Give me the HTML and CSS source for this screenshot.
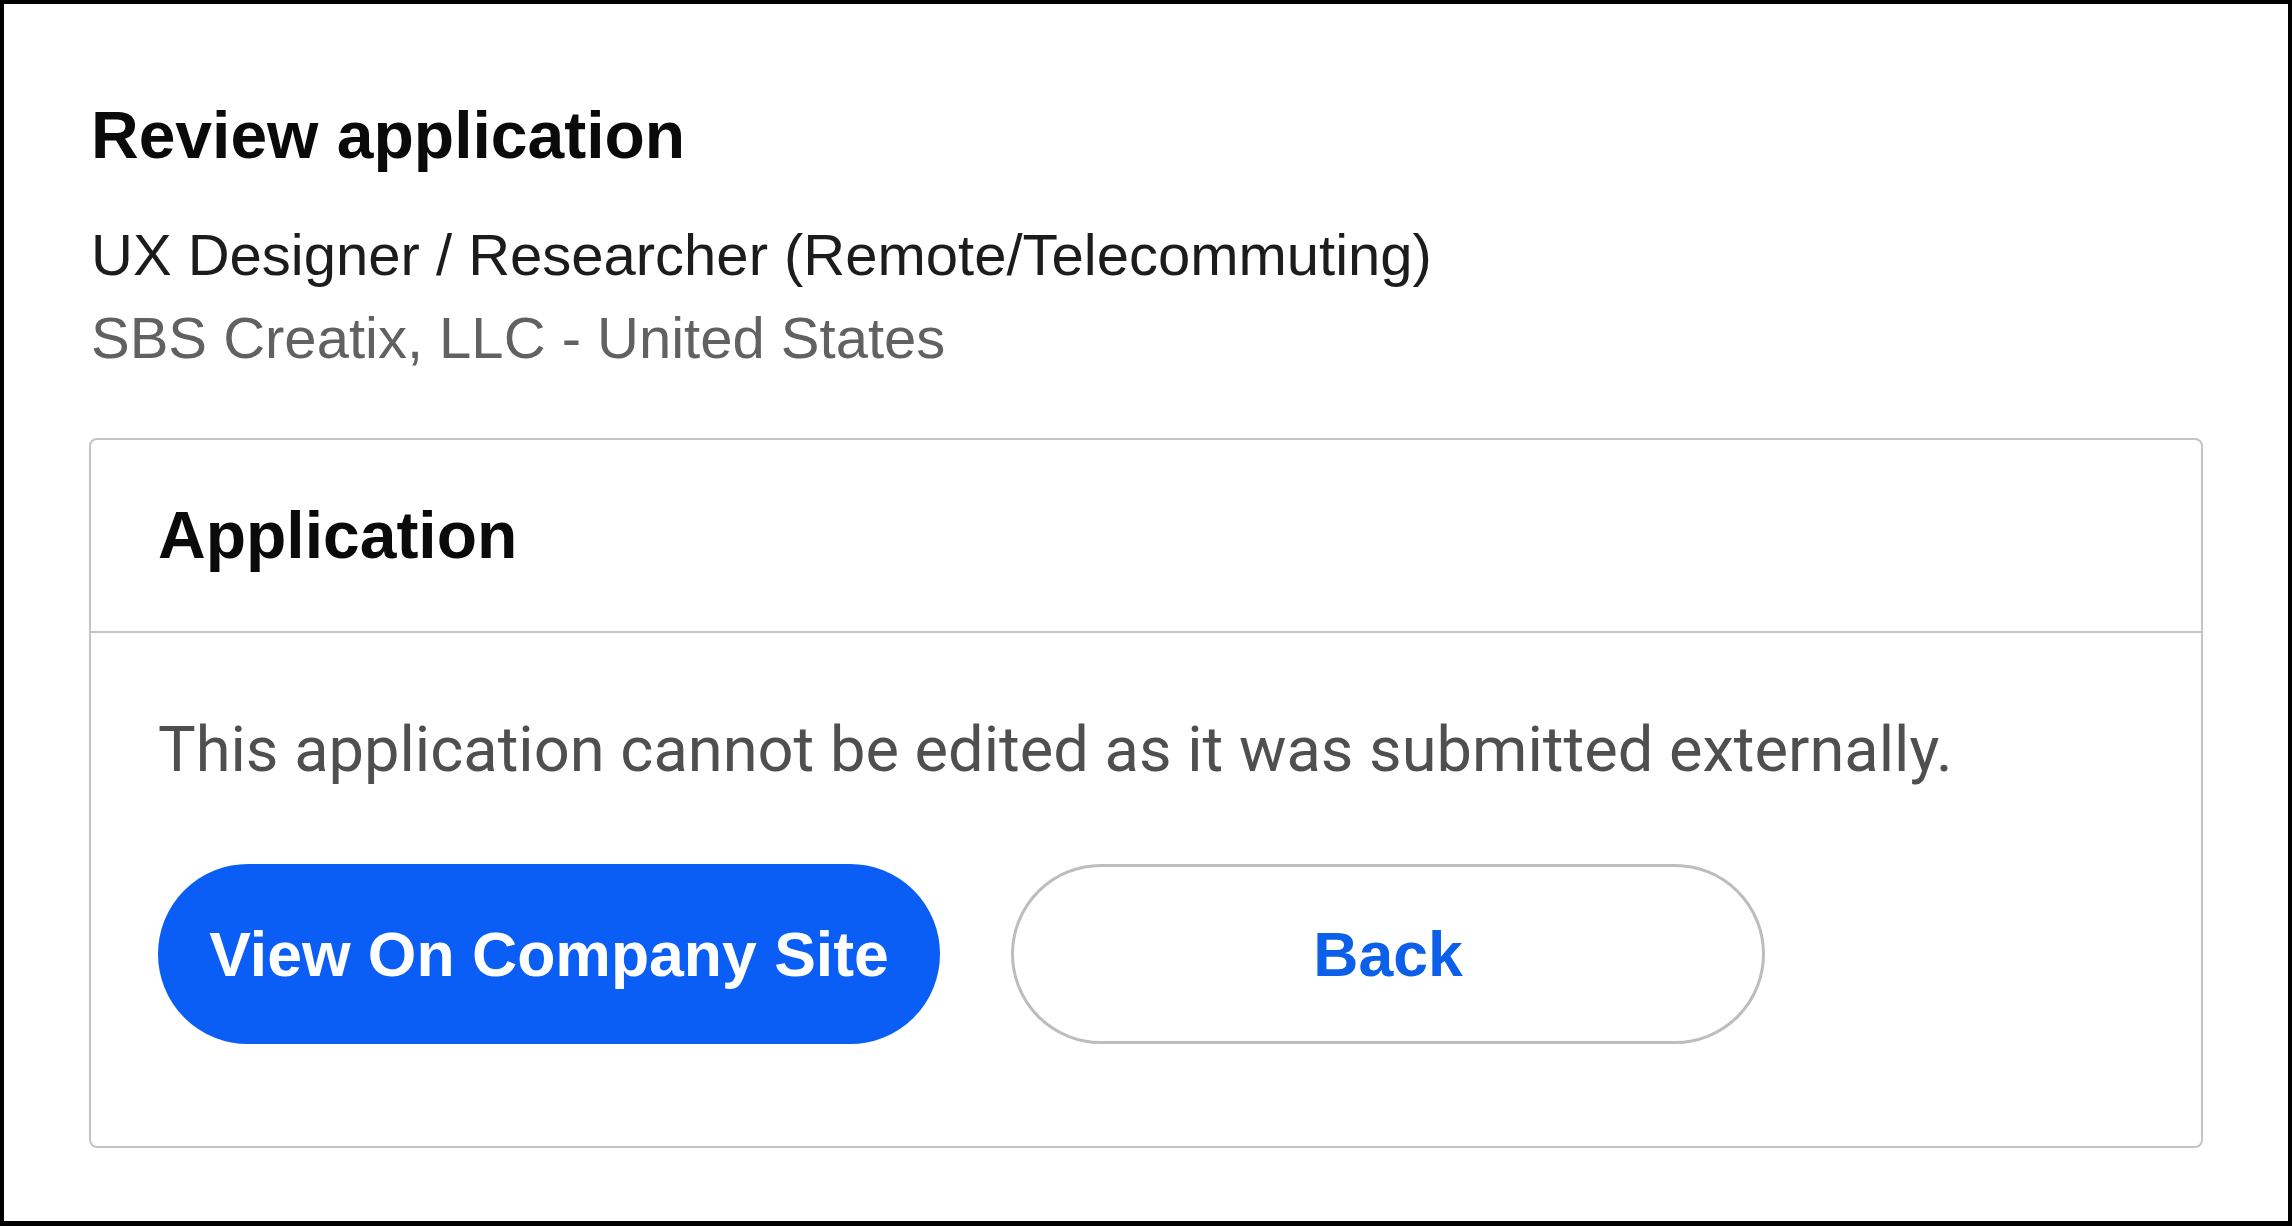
FILE: index.html
```html
<!DOCTYPE html>
<html lang="en">
<head>
<meta charset="utf-8">
<title>Review application</title>
<link rel="stylesheet" href="styles.css">
</head>
<body>
<div class="frame">
  <h1 class="title">Review application</h1>
  <div class="job">
    <div class="job-name">UX Designer / Researcher (Remote/Telecommuting)</div>
    <div class="job-company">SBS Creatix, LLC - United States</div>
  </div>
  <section class="card">
    <header class="card-head">
      <h2 class="card-title">Application</h2>
    </header>
    <div class="card-body">
      <p class="notice">This application cannot be edited as it was submitted externally.</p>
      <div class="actions">
        <button class="btn btn-primary">View On Company Site</button>
        <button class="btn btn-back">Back</button>
      </div>
    </div>
  </section>
</div>
</body>
</html>
```
FILE: styles.css
```css
* { box-sizing: border-box; }
html, body { margin: 0; padding: 0; background: #fff; }
body { font-family: "Liberation Sans", Arial, sans-serif; }

.frame {
  height: 100vh;
  border: 4px solid #000;
  border-bottom-width: 5px;
  padding: 93px 85px 0 85px;
  background: #fff;
  overflow: hidden;
}

.title {
  margin: 0;
  padding-left: 2px;
  font-size: 66px;
  line-height: 76px;
  font-weight: 700;
  color: #0a0a0a;
}

.job {
  margin-top: 40px;
  padding-left: 2px;
  font-size: 58px;
  line-height: 83px;
}
.job-name { color: #1c1c1c; }
.job-company { color: #616161; }

.card {
  margin-top: 59px;
  border: 2px solid #c4c4c4;
  border-radius: 8px;
}

.card-head {
  padding: 57px 67px 58px;
  border-bottom: 2px solid #c4c4c4;
}
.card-title {
  margin: 0;
  font-size: 66px;
  line-height: 76px;
  font-weight: 700;
  color: #0a0a0a;
}

.card-body {
  padding: 79px 67px 102px;
}
.notice {
  margin: 0;
  font-family: Roboto, "Liberation Sans", sans-serif;
  font-size: 63.2px;
  line-height: 74px;
  color: #4f4f4f;
}

.actions {
  margin-top: 78px;
  display: flex;
  gap: 71px;
}

.btn {
  height: 180px;
  border-radius: 90px;
  padding: 0;
  font-family: "Liberation Sans", Arial, sans-serif;
  font-size: 62.5px;
  font-weight: 700;
  white-space: nowrap;
  display: flex;
  align-items: center;
  justify-content: center;
  cursor: pointer;
}
.btn-primary {
  width: 782px;
  background: #0a5ef5;
  color: #fff;
  border: 2px solid #0a5ef5;
}
.btn-back {
  width: 754px;
  background: #fff;
  color: #0b5fe9;
  border: 3px solid #bdbdbd;
}
```
